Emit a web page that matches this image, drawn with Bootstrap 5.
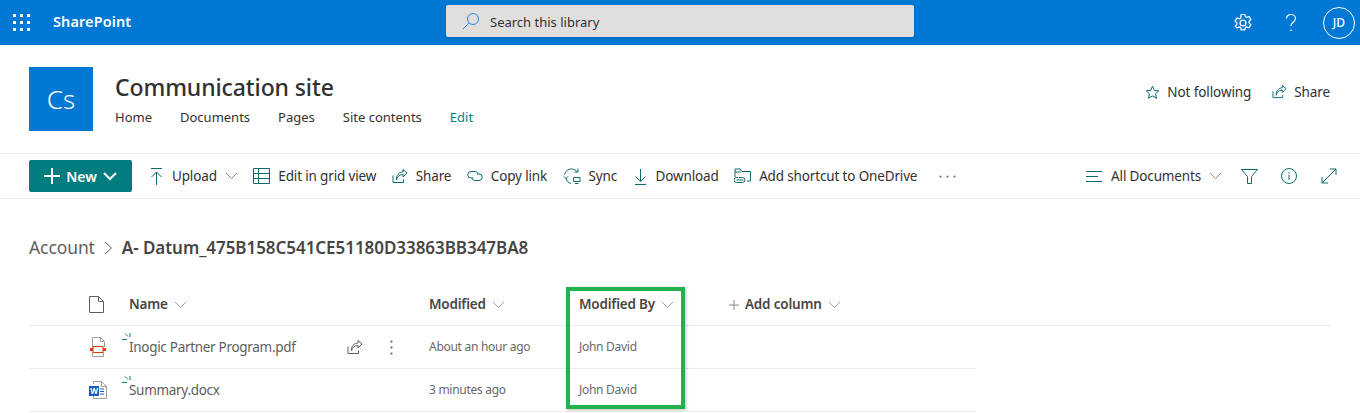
<!DOCTYPE html>
<html lang="en">
<head>
  <meta charset="UTF-8">
  <title>Communication site</title>
  <link href="https://cdn.jsdelivr.net/npm/bootstrap@5.3.2/dist/css/bootstrap.min.css" rel="stylesheet">
  <style>
    body{font-family:"Noto Sans","Open Sans",sans-serif;font-size:13.5px;color:#323130;background:#fff;overflow:hidden;height:413px;position:relative}
    svg{display:block;flex:none;fill:none}
    .suite{height:45px;background:#0078d4;color:#fff}
    .waffle{width:17px;height:17px;margin-left:13px;display:grid;grid-template-columns:repeat(3,3px);gap:4px}
    .waffle i{background:#fff;width:3px;height:3px}
    .brand{font-weight:600;font-size:14.5px;margin-left:23px;letter-spacing:.1px;padding-bottom:2px}
    .search-box{position:absolute;left:446px;top:5px;width:468px;height:32px;background:#e1dfdd;border-radius:2px;color:#323130;font-size:13px;padding-left:15px;gap:9px;box-shadow:0 1px 2px rgba(0,0,0,.2)}
    .search-box span{padding-top:3px}
    .suite-end{margin-left:auto;margin-right:5px;gap:23px}
    .gear-icon{margin-right:7px}
    .avatar{width:32px;height:32px;border:1px solid #fff;border-radius:50%;font-size:12px;font-weight:500}
    .site-head{height:109px;border-bottom:1px solid #edebe9;padding:22px 30px 0 29px}
    .site-logo{width:64px;height:64px;background:#0078d4;color:#fff;font-size:26px;font-weight:300;margin-right:22px}
    .site-title{font-size:23px;font-weight:500;line-height:31px;margin:5px 0 5px;letter-spacing:-.1px}
    .site-nav{gap:28px;font-size:13px;line-height:18px}
    .site-nav .edit-link{color:#038387}
    .follow{gap:7px;font-size:13.5px;margin-top:15px;letter-spacing:-.1px}
    .follow-wrap{gap:21px}
    .cmd{height:45px;border-bottom:1px solid #edebe9;padding:0 23px 0 29px;font-size:13.5px;letter-spacing:-.15px}
    .btn-new{background:#037c80;color:#fff;width:103px;height:32px;border-radius:2px;font-weight:600;font-size:14px;padding:0;gap:6px;letter-spacing:0}
    .btn-new:hover{background:#037c80;color:#fff}
    .cmd-items{margin-left:17px}
    .cmd-item{gap:8px;margin-right:15.5px}
    .more-dots{margin-left:6px}
    .view-chev{margin-right:19px}
    .view-funnel{margin-right:23px}
    .view-icon{margin-right:24px}
    .crumbs{height:39px;margin-top:29px;padding-left:29px;font-size:17.5px;gap:9px;color:#605e5c;letter-spacing:-.1px}
    .crumb-now{font-weight:600;font-size:17px;color:#484644;letter-spacing:-.05px}
    .list-head{margin:17px 29px 0 29px;height:42px;border-bottom:1px solid #edebe9;font-weight:600;font-size:13.5px;color:#484644;letter-spacing:-.2px}
    .head-cell{gap:6px}
    .list-row{margin-left:29px;width:947px;height:43px;border-bottom:1px solid #edebe9;font-size:12px;color:#6a6866;letter-spacing:-.28px}
    .c-icon{width:100px;padding-left:60px}
    .c-name{width:300px}
    .c-mod{width:150px}
    .c-by{width:150px}
    .file-name{font-size:13.5px;position:relative;width:218px;letter-spacing:-.3px;color:#605e5c}
    .file-new{position:absolute;left:-7px;top:-4px}
    .row-acts{gap:27px;width:70px}
    .flag-box{position:absolute;left:566px;top:287px;width:119px;height:122px;border:4px solid #22b14c;box-shadow:1px 1px 3px rgba(0,0,0,.25)}
  </style>
</head>
<body>

<!-- suite bar -->
<div class="suite d-flex align-items-center position-relative">
  <div class="waffle"><i></i><i></i><i></i><i></i><i></i><i></i><i></i><i></i><i></i></div>
  <div class="brand">SharePoint</div>
  <div class="search-box d-flex align-items-center">
    <svg width="20" height="20" viewBox="0 0 20 20" stroke="#2b88d8"><circle cx="12" cy="8" r="5.5"/><path d="M8 12l-6 6"/></svg>
    <span>Search this library</span>
  </div>
  <div class="suite-end d-flex align-items-center">
    <svg class="gear-icon" width="18" height="18" viewBox="1 1 16 16" stroke="#fff" stroke-width="1.1"><circle cx="9" cy="9" r="2.6"/><path d="M7.400 1.200h3.200l.5 2.200 1.200.6 2.100-.8 1.600 2.800-1.600 1.500v1.400l1.600 1.500-1.600 2.800-2.100-.8-1.200.6-.5 2.200H7.400l-.5-2.200-1.200-.6-2.100.8L2 11.700l1.600-1.500V8.800L2 7.300 3.600 4.500l2.100.8 1.200-.6z"/></svg>
    <svg width="18" height="20" viewBox="0 0 18 20" stroke="#fff" stroke-width="1.2"><path d="M4.500 5.500C4.500 3 6.500 1.500 9 1.500s4.500 1.700 4.500 4c0 3.500-4.500 3.500-4.500 7.500"/><path d="M9 16.500v1.500"/></svg>
    <div class="avatar d-flex align-items-center justify-content-center">JD</div>
  </div>
</div>

<!-- site header -->
<div class="site-head d-flex align-items-start">
  <div class="site-logo d-flex align-items-center justify-content-center">Cs</div>
  <div>
    <div class="site-title">Communication site</div>
    <div class="site-nav d-flex"><span>Home</span><span>Documents</span><span>Pages</span><span>Site contents</span><span class="edit-link">Edit</span></div>
  </div>
  <div class="follow-wrap d-flex ms-auto">
    <div class="follow d-flex align-items-center">
      <svg width="15" height="15" viewBox="0 0 15 15" stroke="#0b6a6e"><path d="M7.500 1.200l1.900 4.200 4.400.4-3.300 3 1 4.500-4-2.400-4 2.400 1-4.500-3.300-3 4.400-.4z"/></svg>
      <span>Not following</span>
    </div>
    <div class="follow d-flex align-items-center">
      <svg width="15" height="14" viewBox="0 0 16 15" stroke="#0b6a6e"><path d="M1 6.500v7h10.500v-3"/><path d="M4.500 11c.5-3.500 3-5.500 6.500-5.500V8l4-4-4-3.500V3C7 3 4 6.500 4.500 11z"/></svg>
      <span>Share</span>
    </div>
  </div>
</div>

<!-- command bar -->
<div class="cmd d-flex align-items-center">
  <button class="btn btn-new d-flex align-items-center justify-content-center" type="button">
    <svg width="16" height="16" viewBox="0 0 16 16" stroke="#fff" stroke-width="2"><path d="M8 0v16M0 8h16"/></svg>
    <span>New</span>
    <svg width="14" height="9" viewBox="0 0 14 9" stroke="#fff" stroke-width="2"><path d="M1 1l6 6 6-6"/></svg>
  </button>
  <div class="cmd-items d-flex align-items-center">
    <div class="cmd-item d-flex align-items-center">
      <svg width="15" height="17" viewBox="0 0 15 17" stroke="#0b6a6e"><path d="M2 .5h11M7.500 17V4M2.500 9l5-5 5 5"/></svg>
      <span>Upload</span>
      <svg width="13" height="8" viewBox="0 0 13 8" stroke="#8a8886"><path d="M1 1l5.500 5.500L12 1"/></svg>
    </div>
    <div class="cmd-item d-flex align-items-center">
      <svg width="17" height="16" viewBox="0 0 17 16" stroke="#0b6a6e"><path d="M.5.500h16v15H.5zM.5 5.500h16M.5 10.500h16M5.500.5v15"/></svg>
      <span>Edit in grid view</span>
    </div>
    <div class="cmd-item d-flex align-items-center">
      <svg width="16" height="15" viewBox="0 0 16 15" stroke="#0b6a6e"><path d="M1 6.500v7h10.500v-3"/><path d="M4.500 11c.5-3.500 3-5.500 6.500-5.500V8l4-4-4-3.500V3C7 3 4 6.500 4.500 11z"/></svg>
      <span>Share</span>
    </div>
    <div class="cmd-item d-flex align-items-center">
      <svg width="16" height="12" viewBox="0 0 16 12" stroke="#0b6a6e"><path d="M6 8H4a3.200 3.200 0 010-6.500h4.500A3.200 3.200 0 0111 4"/><path d="M10 4h2a3.200 3.200 0 010 6.500H7.500A3.200 3.200 0 015 8"/></svg>
      <span>Copy link</span>
    </div>
    <div class="cmd-item d-flex align-items-center">
      <svg width="18" height="18" viewBox="0 0 18 18" stroke="#0b6a6e"><path d="M1.500 7.500C2.500 4 5 2 8.500 2c2.500 0 4.500 1 6 3M15 1.500V5h-3.500"/><path d="M1 9.500l2 2 2-2M3 11c.5 3 2.500 5 5 5.500"/><path d="M10.500 10.500h6.500v4h-6.500zM12 16.500h3.500"/></svg>
      <span>Sync</span>
    </div>
    <div class="cmd-item d-flex align-items-center">
      <svg width="15" height="17" viewBox="0 0 15 17" stroke="#0b6a6e"><path d="M2 16.500h11M7.500 1v12M2.500 8.500l5 5 5-5"/></svg>
      <span>Download</span>
    </div>
    <div class="cmd-item d-flex align-items-center">
      <svg width="17" height="16" viewBox="0 0 17 16" stroke="#0b6a6e"><path d="M1 9V1h5l2 2.500h8.500V13H13M1 4h6"/><path d="M4 9.500H2.500a2.500 2.500 0 000 5h6a2.500 2.500 0 000-5H5M2.500 12h7"/></svg>
      <span>Add shortcut to OneDrive</span>
    </div>
    <svg width="17" height="3" viewBox="0 0 17 3" class="more-dots"><circle cx="1.500" cy="1.500" r="1" fill="#605e5c"/><circle cx="8.500" cy="1.500" r="1" fill="#605e5c"/><circle cx="15.500" cy="1.500" r="1" fill="#605e5c"/></svg>
  </div>
  <div class="d-flex align-items-center ms-auto">
    <svg width="17" height="11" viewBox="0 0 17 11" stroke="#0b6a6e" class="me-2"><path d="M0 .5h16M0 5.500h12M0 10.500h16"/></svg>
    <span>All Documents</span>
    <svg width="13" height="8" viewBox="0 0 13 8" stroke="#a08a70" class="ms-2 view-chev"><path d="M1 1l5.500 5.500L12 1"/></svg>
    <svg width="17" height="15" viewBox="0 0 17 15" stroke="#0b6a6e" class="view-funnel"><path d="M.5.500h16l-6 7V14.500h-4V7.500z"/></svg>
    <svg width="16" height="16" viewBox="0 0 16 16" stroke="#0b6a6e" class="view-icon"><circle cx="8" cy="8" r="7.500"/><path d="M8 7v5M8 4v1.500"/></svg>
    <svg width="16" height="16" viewBox="0 0 16 16" stroke="#0b6a6e"><path d="M1 15L15 1M9 1h6v6M1 9v6h6"/></svg>
  </div>
</div>

<!-- breadcrumb -->
<div class="crumbs d-flex align-items-center">
  <span>Account</span>
  <svg width="9" height="14" viewBox="0 0 9 14" stroke="#605e5c"><path d="M1 1l6.500 6L1 13"/></svg>
  <span class="crumb-now">A- Datum_475B158C541CE51180D33863BB347BA8</span>
</div>

<!-- document list -->
<div class="list-head d-flex align-items-center">
  <div class="c-icon">
    <svg width="15" height="17" viewBox="0 0 15 17" stroke="#605e5c"><path d="M.5.500h9l5 5v11H.5zM9.500.5v5h5"/></svg>
  </div>
  <div class="c-name head-cell d-flex align-items-center">Name
    <svg width="13" height="8" viewBox="0 0 13 8" stroke="#a19f9d"><path d="M1 1l5.500 5.500L12 1"/></svg>
  </div>
  <div class="c-mod head-cell d-flex align-items-center">Modified
    <svg width="13" height="8" viewBox="0 0 13 8" stroke="#a19f9d"><path d="M1 1l5.500 5.500L12 1"/></svg>
  </div>
  <div class="c-by head-cell d-flex align-items-center">Modified By
    <svg width="13" height="8" viewBox="0 0 13 8" stroke="#a19f9d"><path d="M1 1l5.500 5.500L12 1"/></svg>
  </div>
  <div class="head-cell d-flex align-items-center">
    <svg width="10" height="10" viewBox="0 0 10 10" stroke="#8a8886"><path d="M5 0v10M0 5h10"/></svg>
    Add column
    <svg width="13" height="8" viewBox="0 0 13 8" stroke="#a19f9d"><path d="M1 1l5.500 5.500L12 1"/></svg>
  </div>
</div>

<div class="list-row d-flex align-items-center">
  <div class="c-icon">
    <svg width="18" height="20" viewBox="0 0 18 20" stroke="#a19f9d"><path d="M3.500 10V.5h8l4 4V10M3.500 15.500V19.500h11v-4M11.500.5v4h4"/><rect x="4" y="9.500" width="10" height="6" stroke="#d83b01"/><rect x="1" y="11" width="3" height="3" fill="#d83b01" stroke="none"/><rect x="14" y="11" width="3" height="3" fill="#d83b01" stroke="none"/></svg>
  </div>
  <div class="c-name d-flex align-items-center">
    <div class="file-name">
      <svg class="file-new" width="11" height="9" viewBox="0 0 11 9" stroke="#038387"><path d="M0 6.500h5M3 .5l3 3M8 0v4"/></svg>
      Inogic Partner Program.pdf
    </div>
    <div class="row-acts d-flex align-items-center">
      <svg width="16" height="15" viewBox="0 0 16 15" stroke="#605e5c"><path d="M1 6.500v7h10.500v-3"/><path d="M4.500 11c.5-3.500 3-5.500 6.500-5.500V8l4-4-4-3.500V3C7 3 4 6.500 4.500 11z"/></svg>
      <svg width="3" height="15" viewBox="0 0 3 15"><circle cx="1.500" cy="1.500" r="1.100" fill="#605e5c"/><circle cx="1.500" cy="7.500" r="1.100" fill="#605e5c"/><circle cx="1.500" cy="13.500" r="1.100" fill="#605e5c"/></svg>
    </div>
  </div>
  <div class="c-mod">About an hour ago</div>
  <div class="c-by">John David</div>
</div>
<div class="list-row d-flex align-items-center">
  <div class="c-icon">
    <svg width="18" height="18" viewBox="0 0 18 18" stroke="#a19f9d"><path d="M4.500 3V.5h8l5 5v12h-13V15M12.500.5v5h5"/><path d="M11 8h4M11 10.500h4M11 13h4" stroke="#185abd"/><rect x="0" y="5" width="10" height="10" fill="#185abd" stroke="none"/><text x="5" y="13" font-size="8" font-weight="700" fill="#fff" stroke="none" text-anchor="middle">W</text></svg>
  </div>
  <div class="c-name d-flex align-items-center">
    <div class="file-name">
      <svg class="file-new" width="11" height="9" viewBox="0 0 11 9" stroke="#038387"><path d="M0 6.500h5M3 .5l3 3M8 0v4"/></svg>
      Summary.docx
    </div>
  </div>
  <div class="c-mod">3 minutes ago</div>
  <div class="c-by">John David</div>
</div>

<!-- highlight drawn on the screenshot -->
<div class="flag-box"></div>

<script src="https://cdn.jsdelivr.net/npm/bootstrap@5.3.2/dist/js/bootstrap.bundle.min.js"></script>
</body>
</html>
